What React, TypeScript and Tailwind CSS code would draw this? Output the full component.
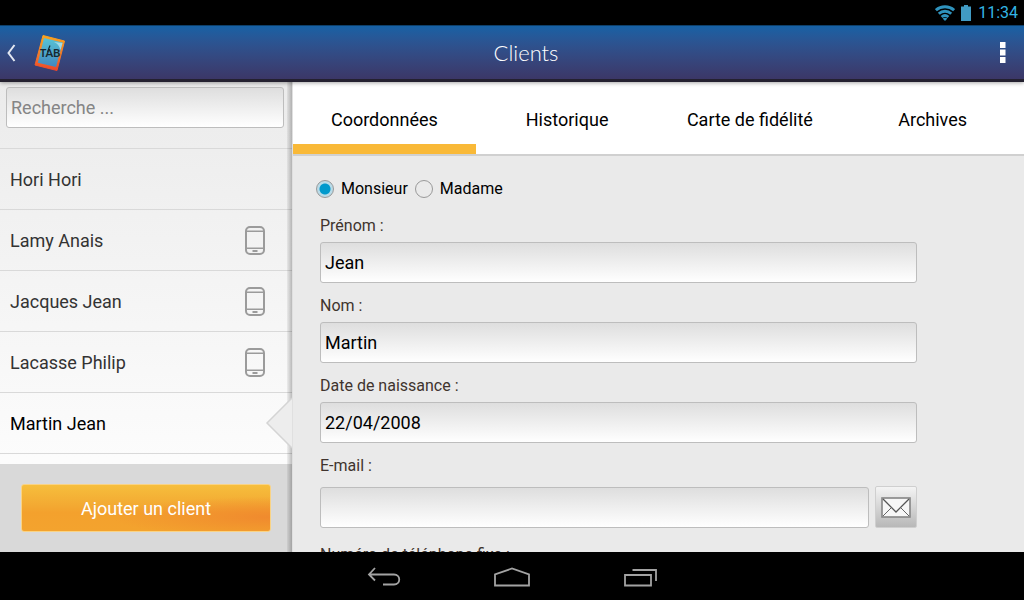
import { useState } from "react";

const clients = [
  { name: "Hori Hori", mobile: false },
  { name: "Lamy Anais", mobile: true },
  { name: "Jacques Jean", mobile: true },
  { name: "Lacasse Philip", mobile: true },
  { name: "Martin Jean", mobile: false },
];

const tabs = ["Coordonnées", "Historique", "Carte de fidélité", "Archives"];

const fieldClass =
  "h-[41px] w-full min-w-0 rounded-[3px] border border-[#bdbdbd] bg-linear-to-b from-[#dedede] to-white px-1 text-lg text-black outline-none";

function StatusBar() {
  return (
    <div className="flex h-[25px] shrink-0 items-center justify-end bg-black pr-[6px] text-[#33b5e5]">
      <svg width="20" height="16" viewBox="0 0 20 16" fill="none" stroke="#2f93bd" strokeWidth="2.9" className="mr-[6px]" aria-hidden="true">
        <path d="M0.9 5.2C6 .6 14 .6 19.1 5.2" />
        <path d="M3.8 8.7C7.4 5.4 12.6 5.4 16.2 8.7" />
        <path d="M6.6 12C8.6 10.2 11.4 10.2 13.4 12" />
        <path d="M7.6 13.6C9 12.5 11 12.5 12.4 13.6L10 16Z" fill="#2f93bd" stroke="none" />
      </svg>
      <svg width="10" height="16" viewBox="0 0 10 16" fill="#419bc4" className="mr-[7px]" aria-hidden="true">
        <path d="M3 0h4v1.5h3V16H0V1.5h3z" />
      </svg>
      <span className="text-base leading-6">11:34</span>
    </div>
  );
}

function Logo() {
  return (
    <svg width="32" height="38" viewBox="0 0 32 38" aria-hidden="true">
      <defs>
        <linearGradient id="frame" x1="0" y1="0" x2="0" y2="1">
          <stop offset="0" stopColor="#fba51d" />
          <stop offset="0.6" stopColor="#f4752a" />
          <stop offset="1" stopColor="#ee4529" />
        </linearGradient>
        <linearGradient id="screen" x1="0" y1="0" x2="0" y2="1">
          <stop offset="0" stopColor="#57c3d5" />
          <stop offset="1" stopColor="#4388bf" />
        </linearGradient>
      </defs>
      <path d="M9 1.5L30.5 7L23 36.5L1 31Z" fill="url(#frame)" stroke="url(#frame)" strokeLinejoin="round" />
      <path d="M10 4L28.7 8.6L22 33L3.8 28.8Z" fill="url(#screen)" />
      <path d="M20 8L28.5 9L26.5 16Q25 10 20 8Z" fill="#b7e4ea" opacity=".8" />
      <text x="16" y="23" textAnchor="middle" fontFamily="Lato" fontWeight="700" fontSize="11" fill="#17282f">TAB</text>
      <path d="M13.5 18L16 11.5" stroke="#17282f" strokeWidth="1.2" />
    </svg>
  );
}

function Header() {
  return (
    <header className="relative z-10 flex h-[57px] shrink-0 items-center border-b-[3px] border-t border-b-[#242130] border-t-[#0e3f69] bg-linear-to-b from-[#1661a5] to-[#3b3767] px-[6px] shadow-[0_1px_4px_rgba(0,0,0,0.35)]">
      <div className="flex flex-1 items-center">
        <button type="button" aria-label="Retour" className="flex items-center gap-[18px]">
          <svg width="10" height="18" viewBox="0 0 10 18" fill="none" stroke="#e3e8f2" strokeWidth="2" aria-hidden="true">
            <path d="M8.5 1L2.5 9L8.5 17" />
          </svg>
          <Logo />
        </button>
      </div>
      <h1 className="pl-7 font-[Lato] text-[22px] font-light leading-7 text-white">Clients</h1>
      <div className="flex flex-1 justify-end">
        <button type="button" aria-label="Menu" className="px-3">
          <svg width="6" height="21" viewBox="0 0 6 21" fill="white" aria-hidden="true">
            <path d="M0 0h5.5v6H0zM0 7.5h5.5v6H0zM0 15h5.5v6H0z" />
          </svg>
        </button>
      </div>
    </header>
  );
}

function PhoneIcon() {
  return (
    <svg width="20" height="29" viewBox="0 0 20 29" fill="none" stroke="#9b9b9b" strokeWidth="2" aria-hidden="true">
      <rect x="1" y="1" width="18" height="27" rx="4" />
      <path d="M1.5 5.2H18.5M1.5 22.2H18.5" strokeWidth="1.5" />
      <path d="M7.5 25H12.5" strokeWidth="2" />
    </svg>
  );
}

function Sidebar() {
  const [selected, setSelected] = useState("Martin Jean");
  return (
    <aside className="relative flex w-[292px] shrink-0 flex-col bg-linear-to-b from-[#ebebeb] to-[#fcfcfc] to-80%">
      <div className="py-[5px] pl-[6px] pr-2">
        <input
          type="search"
          aria-label="Recherche"
          placeholder="Recherche ..."
          className={fieldClass + " placeholder:text-[#858585]"}
        />
      </div>
      <ul className="mt-[15px] min-h-0 flex-1 overflow-hidden border-t border-[#d9d9d9]">
        {clients.map((c) => (
          <li key={c.name} className="relative h-[61px] border-b border-[#d9d9d9]">
            <button
              type="button"
              onClick={() => setSelected(c.name)}
              className={
                "flex h-full w-full items-center justify-between pl-[10px] pr-[27px] pt-px text-left text-lg " +
                (c.name === selected ? "text-black" : "text-[#333]")
              }
            >
              {c.name}
              {c.mobile && <PhoneIcon />}
            </button>
            {c.name === selected && (
              <svg width="27" height="52" viewBox="0 0 27 52" className="absolute right-0 top-1 z-10" aria-hidden="true">
                <path d="M27 1L2 26L27 51Z" fill="#ededed" />
                <path d="M27 1L2 26L27 51" fill="none" stroke="#d4d4d4" strokeWidth="1.5" />
              </svg>
            )}
          </li>
        ))}
      </ul>
      <div className="shrink-0 bg-[#d9d9d9] px-[21px] py-5">
        <button
          type="button"
          className="h-12 w-full rounded-[3px] border border-[#f9d385] bg-[radial-gradient(ellipse_at_100%_70%,#f08a2e_0%,rgba(240,138,46,0)_45%),linear-gradient(to_bottom,#f6be3c_0%,#f3a932_45%,#f3a12d_60%,#f3a32e_100%)] pt-px text-lg text-white"
        >
          Ajouter un client
        </button>
      </div>
      <div className="pointer-events-none absolute inset-y-0 right-0 w-[5px] bg-linear-to-r from-black/5 to-black/25" />
    </aside>
  );
}

function Field({ id, label, value }: { id: string; label: string; value: string }) {
  return (
    <div className="h-20">
      <label htmlFor={id} className="block h-7 text-base leading-6 text-[#40342e]">
        {label}
      </label>
      <input id={id} type="text" defaultValue={value} className={fieldClass} />
    </div>
  );
}

function Title({ label, checked }: { label: string; checked?: boolean }) {
  return (
    <label className="flex items-center gap-[7px] text-base leading-6 text-black">
      <input
        type="radio"
        name="civilite"
        defaultChecked={checked}
        className="size-[18px] appearance-none rounded-full border border-[#999] checked:bg-[radial-gradient(circle,#0099cc_0_5px,#b9dbe8_6px)]"
      />
      {label}
    </label>
  );
}

function Details() {
  const [tab, setTab] = useState(tabs[0]);
  return (
    <main className="flex min-w-0 flex-1 flex-col border-l border-[#e0e0e0] bg-[#eaeaea]">
      <nav className="flex h-[74px] shrink-0 border-b-2 border-[#d0d0d0] bg-white">
        {tabs.map((t) => (
          <button
            key={t}
            type="button"
            onClick={() => setTab(t)}
            className={
              "flex-1 border-b-10 pt-[14px] text-lg text-black " + (t === tab ? "border-[#f9b938]" : "border-transparent")
            }
          >
            {t}
          </button>
        ))}
      </nav>
      <form className="min-h-0 flex-1 overflow-hidden pl-[27px] pr-[107px] pt-[21px]">
        <div className="-ml-1 mb-[13px] flex gap-[7px]">
          <Title label="Monsieur" checked />
          <Title label="Madame" />
        </div>
        <Field id="prenom" label="Prénom :" value="Jean" />
        <Field id="nom" label="Nom :" value="Martin" />
        <Field id="naissance" label="Date de naissance :" value="22/04/2008" />
        <label htmlFor="email" className="block h-8 text-base leading-6 text-[#40342e]">
          E-mail :
        </label>
        <div className="mb-[15px] flex items-center gap-[6px]">
          <input id="email" type="email" className={fieldClass} />
          <button
            type="button"
            aria-label="Envoyer un e-mail"
            className="flex size-[42px] shrink-0 items-center justify-center rounded-[2px] border border-[#cfcfcf] bg-linear-to-b from-[#f4f4f4] to-[#b8b8b8]"
          >
            <svg width="30" height="21" viewBox="0 0 30 21" fill="none" stroke="#666" aria-hidden="true">
              <rect x="1" y="1" width="28" height="19" fill="#f6f6f6" stroke="#858585" strokeWidth="1.6" />
              <path d="M2 2L15 15L28 2" stroke="#555" strokeWidth="1.3" />
              <path d="M2 19L10.5 10.5M28 19L19.5 10.5" />
            </svg>
          </button>
        </div>
        <Field id="telephone" label="Numéro de téléphone fixe :" value="" />
      </form>
    </main>
  );
}

function SystemNav() {
  return (
    <div className="flex h-12 shrink-0 items-center justify-center bg-black pt-[2px] text-[#a3a3a3]">
      <button type="button" aria-label="Retour système" className="flex h-full w-32 items-center justify-center">
        <svg width="34" height="20" viewBox="0 0 34 20" fill="none" stroke="currentColor" strokeWidth="1.8" aria-hidden="true">
          <path d="M8 1L2 7.5L8 13.5M2 7.5H27C34 7.5 34 17.5 27 17.5H16" />
        </svg>
      </button>
      <button type="button" aria-label="Accueil" className="flex h-full w-32 items-center justify-center">
        <svg width="36" height="20" viewBox="0 0 36 20" fill="none" stroke="currentColor" strokeWidth="1.8" aria-hidden="true">
          <path d="M1 18.5V7.5L18 1.5L35 7.5V18.5Z" />
        </svg>
      </button>
      <button type="button" aria-label="Applications récentes" className="flex h-full w-32 items-center justify-center">
        <svg width="34" height="20" viewBox="0 0 34 20" fill="none" stroke="currentColor" strokeWidth="1.8" aria-hidden="true">
          <path d="M2 8H28V18.5H2ZM9.5 3H33V14" />
        </svg>
      </button>
    </div>
  );
}

export default function App() {
  return (
    <div className="flex h-screen flex-col overflow-hidden bg-black font-[Roboto,sans-serif]">
      <StatusBar />
      <Header />
      <div className="flex min-h-0 flex-1">
        <Sidebar />
        <Details />
      </div>
      <SystemNav />
    </div>
  );
}
